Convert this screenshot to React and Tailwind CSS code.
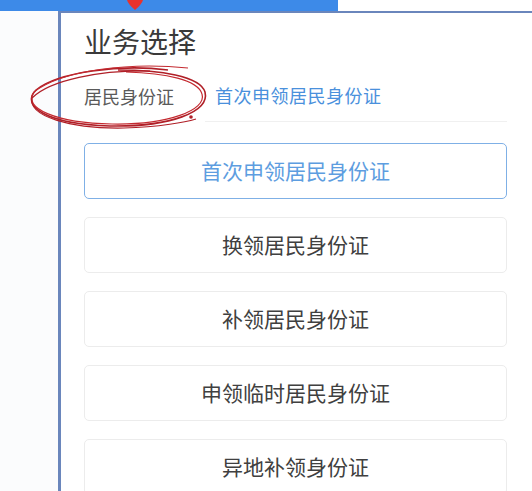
import React from 'react';

const options = [
  { label: '首次申领居民身份证', active: true },
  { label: '换领居民身份证' },
  { label: '补领居民身份证' },
  { label: '申领临时居民身份证' },
  { label: '异地补领身份证' },
];

function Scribble() {
  // hand-drawn red ellipse round the first tab
  return (
    <svg className="absolute left-0 top-0 pointer-events-none" width="240" height="140" viewBox="0 0 240 140" fill="none">
      <path d="M168 70 C120 64 58 72 36 90 C20 106 46 124 110 126 C170 127 210 112 205 92 C200 76 160 70 118 70" stroke="#b01f27" strokeWidth="1.6" />
      <path d="M188 68 C130 62 62 70 34 92 C22 108 56 123 112 124 C168 125 207 110 202 94 C198 80 166 73 126 72" stroke="#c42a30" strokeWidth="1.2" />
      <path d="M150 71 C100 70 50 80 32 98 C28 116 70 129 124 128 C160 127 186 122 196 119" stroke="#b01f27" strokeWidth="1.2" />
      <circle cx="191" cy="117" r="1.8" fill="#b01f27" />
    </svg>
  );
}

export default function App() {
  return (
    <div className="relative w-[532px] h-[491px] overflow-hidden bg-[#fbfcfd]" style={{ fontFamily: '"Noto Sans CJK SC", "Noto Sans", sans-serif' }}>
      {/* top strip */}
      <div className="flex h-[11px]">
        <div className="w-[338px] bg-[#3d8ae8]" />
        <div className="flex-1 bg-white" />
      </div>
      <svg className="absolute top-0 left-[127px]" width="16" height="10" viewBox="0 0 16 10">
        <path d="M0 0 H16 Q15 4 8 10 Q1 4 0 0Z" fill="#e8322d" />
      </svg>

      {/* panel */}
      <div className="relative ml-[58px] h-[480px] bg-white border-l-[3px] border-t-[2px] border-[#6a86bc] pl-[23px] pr-[25px]">
        <div className="pt-[10px] mb-[11px] text-[28px] leading-[36px] text-[#3a3a3a]">业务选择</div>

        <div className="flex h-[52px]">
          <div className="flex items-center w-[121px] text-[18px] text-[#5a5a5a]">居民身份证</div>
          <div className="flex-1 flex items-center border-b border-[#f0f0f0] pl-[10px] text-[18px] tracking-[0.5px] text-[#4a90dc]">首次申领居民身份证</div>
        </div>

        <div className="mt-[21px] flex flex-col gap-[18px]">
          {options.map((o) => (
            <div
              key={o.label}
              className={
                o.active
                  ? 'h-[56px] flex items-center justify-center rounded-[5px] border border-[#7fb0e6] text-[21px] text-[#5d9de0]'
                  : 'h-[56px] flex items-center justify-center rounded-[5px] border border-[#ececec] text-[21px] text-[#404040]'
              }
            >
              {o.label}
            </div>
          ))}
        </div>
      </div>

      <Scribble />
    </div>
  );
}
